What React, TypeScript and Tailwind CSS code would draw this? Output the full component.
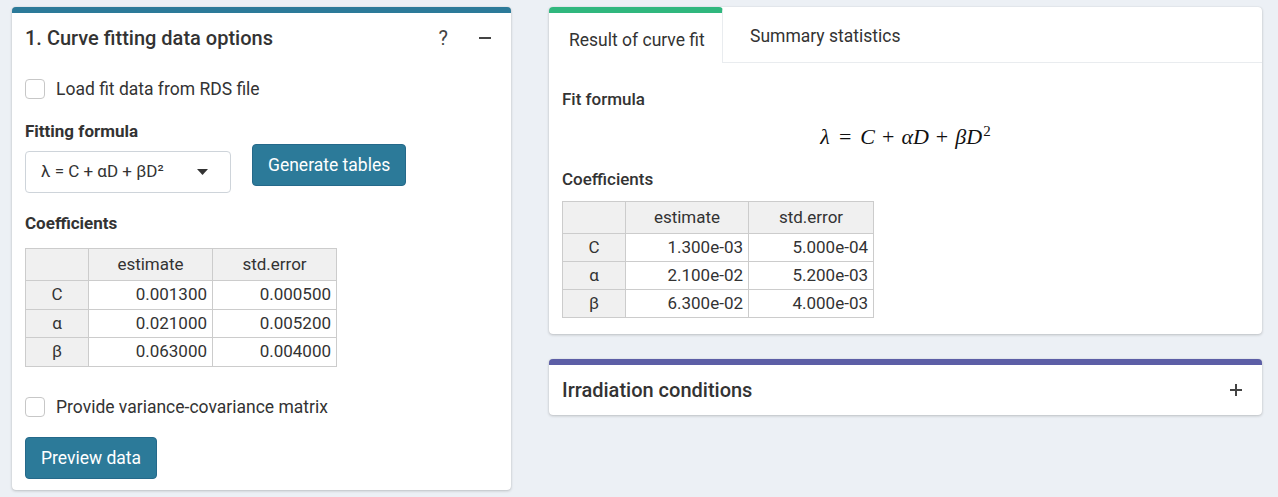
import React from 'react';

const font = { fontFamily: 'Roboto, "Noto Sans", sans-serif' };

function Checkbox({ label }: { label: string }) {
  return (
    <label className="flex items-center gap-[11px] h-[20px]">
      <span className="w-[20px] h-[20px] rounded-[4px] border border-[#c7c7c7] bg-white shrink-0" />
      <span className="text-[17.5px] text-[#333]">{label}</span>
    </label>
  );
}

type Row = [string, string, string];

function CoefTable({
  rows,
  col1,
  col2,
  col3,
  rowH,
}: {
  rows: Row[];
  col1: number;
  col2: number;
  col3: number;
  rowH: number;
}) {
  return (
    <table className="border-collapse text-[17px] text-[#333]">
      <thead>
        <tr className="h-[32px] bg-[#f0f0f0]">
          <th className="border border-[#cccccc] font-normal" style={{ width: col1 }} />
          <th className="border border-[#cccccc] font-normal text-center" style={{ width: col2 }}>estimate</th>
          <th className="border border-[#cccccc] font-normal text-center" style={{ width: col3 }}>std.error</th>
        </tr>
      </thead>
      <tbody>
        {rows.map((r) => (
          <tr key={r[0]} style={{ height: rowH }}>
            <td className="border border-[#cccccc] bg-[#f0f0f0] text-center">{r[0]}</td>
            <td className="border border-[#cccccc] bg-white text-right pr-[5px]">{r[1]}</td>
            <td className="border border-[#cccccc] bg-white text-right pr-[5px]">{r[2]}</td>
          </tr>
        ))}
      </tbody>
    </table>
  );
}

function Minus() {
  return (
    <svg width="12" height="12" viewBox="0 0 12 12">
      <rect x="0" y="5" width="12" height="2" fill="#444" />
    </svg>
  );
}

function Plus() {
  return (
    <svg width="12" height="12" viewBox="0 0 12 12">
      <rect x="0" y="5" width="12" height="2" fill="#444" />
      <rect x="5" y="0" width="2" height="12" fill="#444" />
    </svg>
  );
}

const cardShadow = 'shadow-[0_0_1px_rgba(0,0,0,0.125),0_1px_3px_rgba(0,0,0,0.2)]';

export default function App() {
  return (
    <div className="min-h-[497px] bg-[#ecf0f5] flex items-start gap-[38px] pl-[12px] pt-[7px]" style={font}>
      {/* left card */}
      <div className={`w-[499px] bg-white rounded-[4px] border-t-[6px] border-[#2c7a99] ${cardShadow}`}>
        <div className="h-[50px] flex items-center pl-[13px] pr-[20px]">
          <h3 className="text-[20px] font-medium text-[#333] flex-1">1. Curve fitting data options</h3>
          <span className="text-[20px] text-[#444] mr-[31px] leading-none">?</span>
          <Minus />
        </div>
        <div className="px-[13px] pt-[16px] pb-[11px] flex flex-col">
          <Checkbox label="Load fit data from RDS file" />
          <div className="flex items-start mt-[20px]">
            <div className="flex flex-col">
              <div className="text-[17px] font-bold text-[#333] h-[24px] leading-[24px]">Fitting formula</div>
              <div className="mt-[8px] w-[206px] h-[42px] border border-[#ced4da] rounded-[4px] flex items-center pl-[15px] pr-[22px] text-[17px] text-[#333]">
                <span className="flex-1">λ = C + αD + βD²</span>
                <svg width="11" height="6" viewBox="0 0 11 6">
                  <polygon points="0,0 11,0 5.5,6" fill="#333" />
                </svg>
              </div>
            </div>
            <button className="ml-[21px] mt-[25px] h-[42px] px-[15px] rounded-[4px] bg-[#2c7a99] border border-[#25698a] text-white text-[17.5px]">
              Generate tables
            </button>
          </div>
          <div className="mt-[18px] text-[17px] font-bold text-[#333] h-[24px] leading-[24px]">Coefficients</div>
          <div className="mt-[13px]">
            <CoefTable
              col1={63}
              col2={124}
              col3={124}
              rowH={28.7}
              rows={[
                ['C', '0.001300', '0.000500'],
                ['α', '0.021000', '0.005200'],
                ['β', '0.063000', '0.004000'],
              ]}
            />
          </div>
          <div className="mt-[30px]">
            <Checkbox label="Provide variance-covariance matrix" />
          </div>
          <div className="mt-[20px]">
            <button className="h-[42px] px-[15px] rounded-[4px] bg-[#2c7a99] border border-[#25698a] text-white text-[17.5px]">
              Preview data
            </button>
          </div>
        </div>
      </div>

      {/* right column */}
      <div className="w-[713px] flex flex-col gap-[25px]">
        <div className={`bg-white rounded-[4px] ${cardShadow}`}>
          <div className="flex h-[56px]">
            <div className="w-[174px] border-t-[6px] border-[#30b77e] rounded-tl-[4px] rounded-tr-[4px] border-r border-r-[#e9ecef] flex items-center pl-[20px] text-[17.5px] text-[#333]">
              <span className="pt-[4px]">Result of curve fit</span>
            </div>
            <div className="flex-1 flex items-center border-b border-[#e9ecef] pl-[27px] text-[17.5px] text-[#333]">
              <span className="pt-[4px]">Summary statistics</span>
            </div>
          </div>
          <div className="px-[13px] pt-[24px] pb-[16px]">
            <div className="text-[17px] font-medium text-[#333] h-[24px] leading-[24px]">Fit formula</div>
            <div
              className="mt-[12px] h-[28px] flex items-baseline justify-center text-[22px] text-[#111] leading-[28px]"
              style={{ fontFamily: '"Liberation Serif", "DejaVu Serif", serif' }}
            >
              <i>λ</i>
              <span className="mx-[9px]">=</span>
              <i>C</i>
              <span className="mx-[7px]">+</span>
              <i>αD</i>
              <span className="mx-[7px]">+</span>
              <i>βD</i>
              <span className="relative bottom-[8px] text-[15px] leading-none ml-[1px]">2</span>
            </div>
            <div className="mt-[16px] text-[17px] font-medium text-[#333] h-[24px] leading-[24px]">Coefficients</div>
            <div className="mt-[10px]">
              <CoefTable
                col1={63}
                col2={123}
                col3={125}
                rowH={28}
                rows={[
                  ['C', '1.300e-03', '5.000e-04'],
                  ['α', '2.100e-02', '5.200e-03'],
                  ['β', '6.300e-02', '4.000e-03'],
                ]}
              />
            </div>
          </div>
        </div>

        <div className={`bg-white rounded-[4px] border-t-[6px] border-[#5c5ea6] ${cardShadow}`}>
          <div className="h-[50px] flex items-center pl-[13px] pr-[20px]">
            <h3 className="text-[20px] font-medium text-[#333] flex-1">Irradiation conditions</h3>
            <Plus />
          </div>
        </div>
      </div>
    </div>
  );
}
